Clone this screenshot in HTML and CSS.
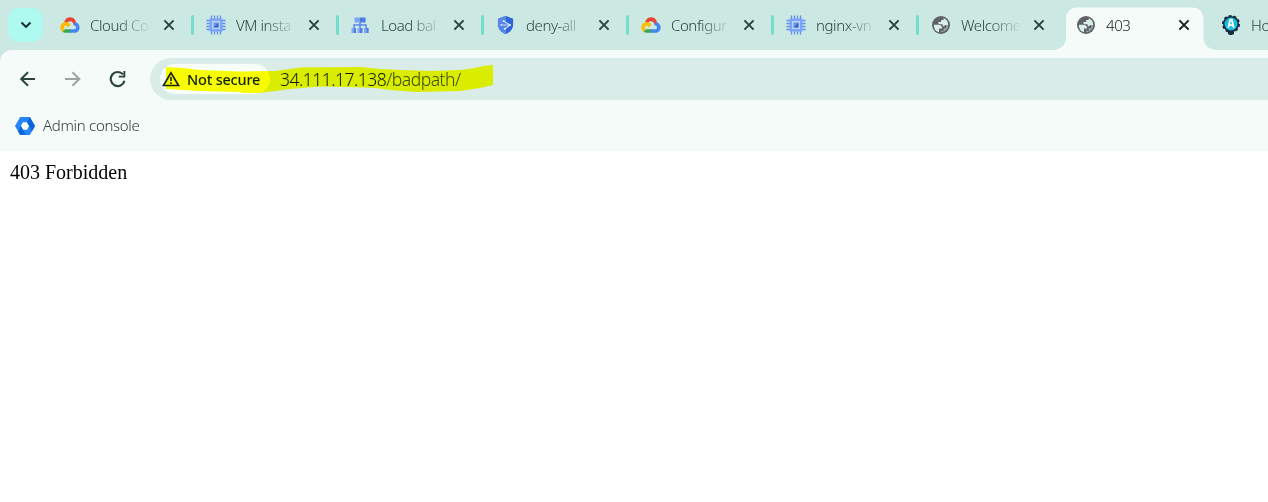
FILE: index.html
```
<!DOCTYPE html>
<html lang="en">
<head>
<meta charset="utf-8">
<title>403</title>
<link rel="stylesheet" href="styles.css">
</head>
<body>
<svg class="defs" aria-hidden="true">
  <symbol id="cloud" viewBox="0 0 20 16">
    <path d="M4.200 5.100C5 2 7.300.300 10 .300c3 0 5.400 2 6.100 4.900l-2.500 2.500C13 5.200 11.800 4.200 10 4.200c-1.600 0-2.700.800-3.300 2z" fill="#ea4335"/>
    <path d="M15.900 5.200c2.200.800 3.700 2.700 3.700 5.200 0 3.100-2.200 5.400-5.300 5.400H10v-3.600h4.100c1.200 0 1.900-.700 1.900-1.800s-.800-1.900-2-1.900l-.700-1.700z" fill="#4285f4"/>
    <path d="M10.200 12.200v3.600H5.700c-1.300 0-2.400-.400-3.300-1.100L5 12.200z" fill="#34a853"/>
    <path d="M2.400 14.700C1.100 13.700.400 12.300.400 10.500c0-3 2.300-5.400 5.300-5.400 2.200 0 3.900 1 4.700 2.800L7.900 10.400C7.400 9.200 6.800 8.700 5.700 8.700c-1.100 0-1.800.800-1.800 1.800 0 .700.400 1.300 1.100 1.700z" fill="#fbbc04"/>
  </symbol>
  <symbol id="chip" viewBox="0 0 20 20">
    <path d="M5.500 .5v4M8.500 .5v4M11.500 .5v4M14.500 .5v4M5.500 15.500v4M8.500 15.500v4M11.500 15.500v4M14.500 15.500v4M.5 5.500h4M.5 8.500h4M.5 11.500h4M.5 14.500h4M15.500 5.500h4M15.500 8.500h4M15.500 11.500h4M15.500 14.500h4" stroke="#5d8ef0" stroke-width="1.300"/>
    <path d="M3.500 3.500h13v13h-13z" fill="#7da4f5"/>
    <path d="M6 6h8v8H6z" fill="#bcd5f2"/>
    <path d="M7.500 7.500h5v5h-5z" fill="#6792ef"/><path d="M12.500 7.500v5h-5z" fill="#3467d6"/>
  </symbol>
  <symbol id="balance" viewBox="0 0 18 16">
    <path d="M9 5v6M3 12V8h12v4" fill="none" stroke="#5b86e9" stroke-width="1.500"/>
    <path d="M3.500.5H9v5H3.500zM.5 11h4v5h-4zM6.500 11h2.500v5H6.500zM13 11h2.300v5H13z" fill="#7da4f5"/>
    <path d="M9 .5h5.500v5H9zM3 11h2v5H3zM9 11h2.500v5H9zM15.300 11h2.300v5h-2.300z" fill="#4d7ce5"/>
  </symbol>
  <symbol id="shield" viewBox="0 0 16 19">
    <path d="M8 .3.3 3.300v5.600c0 4.300 3 8 7.700 9.800z" fill="#5585e8"/>
    <path d="M8 .3l7.700 3v5.600c0 4.300-3 8-7.700 9.800z" fill="#2f65d8"/>
    <path d="M3.800 9.500h8.700M6 5.500l6.500 4-5.300 4" fill="none" stroke="#c8dcfa" stroke-width="1.200"/>
    <path d="M5.200 4.700h1.600v1.600H5.200zM2.900 8.700h1.600v1.600H2.900zM11.500 8.700h1.800v1.800h-1.800zM6.400 12.700H8v1.600H6.400z" fill="#e3effd"/>
  </symbol>
  <symbol id="globe" viewBox="0 0 18 18">
    <circle cx="9" cy="9" r="9" fill="#5f6368"/>
    <path d="M1.900 8.700h4.300c2.600 0 4 1.300 3.900 3.900H7v3.600A7.300 7.300 0 0 1 1.900 8.700z" fill="#d9eee9"/>
    <path d="M11.600 2.200A7.300 7.300 0 0 1 16.200 9h-3.100c-.5 1-1.300 1.500-2.400 1.300V8.300H8.500C7 8.300 6.200 7.500 6.300 6h2.800V3.900h2.500z" fill="#d9eee9"/>
    <path d="M16.200 9a7.300 7.300 0 0 1-7 7.200v-1.500h2.600v-2.500h2.400V9z" fill="#d9eee9" opacity=".5"/>
  </symbol>
  <symbol id="close" viewBox="0 0 12 12">
    <path d="M1.400 1.400l9.200 9.200M10.600 1.400l-9.200 9.200" fill="none" stroke="currentColor" stroke-width="2"/>
  </symbol>
</svg>

<header class="strip">
  <button class="search" aria-label="Search tabs"><svg width="12" height="8" viewBox="0 0 12 8"><path d="M1.500 1.500 6 5.900l4.500-4.400" fill="none" stroke="#0d2b27" stroke-width="2"/></svg></button>
  <div class="tab first"><svg class="icon"><use href="#cloud" y="2" width="20" height="16"/></svg><span class="title">Cloud Co</span><svg class="x"><use href="#close"/></svg></div>
  <div class="tab"><svg class="icon"><use href="#chip" width="20" height="20"/></svg><span class="title">VM insta</span><svg class="x"><use href="#close"/></svg></div>
  <div class="tab"><svg class="icon"><use href="#balance" y="2" width="18" height="16"/></svg><span class="title">Load bal</span><svg class="x"><use href="#close"/></svg></div>
  <div class="tab"><svg class="icon"><use href="#shield" x="1.500" y="0.500" width="16" height="19"/></svg><span class="title">deny-all</span><svg class="x"><use href="#close"/></svg></div>
  <div class="tab"><svg class="icon"><use href="#cloud" y="2" width="20" height="16"/></svg><span class="title">Configur</span><svg class="x"><use href="#close"/></svg></div>
  <div class="tab"><svg class="icon"><use href="#chip" width="20" height="20"/></svg><span class="title">nginx-vn</span><svg class="x"><use href="#close"/></svg></div>
  <div class="tab last"><svg class="icon"><use href="#globe" x="1" y="1" width="18" height="18"/></svg><span class="title">Welcome</span><svg class="x"><use href="#close"/></svg></div>
  <div class="tab active"><svg class="shape" viewBox="0 0 166 43"><path d="M0 43C9 43 14 38 14 30V13Q14 .5 26 .5H139Q151.500 .5 151.500 13V30C151.500 38 157 43 166 43z" fill="#f4fbf9"/></svg><svg class="icon"><use href="#globe" x="1" y="1" width="18" height="18"/></svg><span class="title">403</span><svg class="x"><use href="#close"/></svg></div>
  <div class="tab end"><svg class="icon" viewBox="0 0 20 20"><circle cx="10" cy="9" r="8" fill="#172b40" stroke="#172b40" stroke-width="2" stroke-dasharray="3 2"/><path d="M7 16h6v3l-2 1H9l-2-1z" fill="#172b40"/><circle cx="10" cy="9" r="6.500" fill="#19bce0"/><path d="M7.200 13 9.200 4.700h1.600l2 8.300M8 10.200h4" fill="none" stroke="#fff" stroke-width="1.700"/></svg><span class="title">Ho</span></div>
</header>

<nav class="toolbar">
  <svg class="nav" viewBox="0 0 18 18"><path d="M16 9H2.500M9 2.200 2.200 9 9 15.800" fill="none" stroke="#29443f" stroke-width="2"/></svg>
  <svg class="nav" viewBox="0 0 18 18"><path d="M1 9h14M8.500 2.200 15.300 9l-6.800 6.800" fill="none" stroke="#9aa5a2" stroke-width="2"/></svg>
  <svg class="nav" viewBox="0 0 18 18"><path d="M14 4.400A7 7 0 1 0 15.500 10.800" fill="none" stroke="#29443f" stroke-width="2.200"/><path d="M16.300 1v6.500H9.800V5.700h4.600V1z" fill="#29443f"/></svg>
  <div class="address">
    <div class="chipbox"><svg class="warn" viewBox="0 0 18 16"><path d="M9 1.800 1.500 14.500h15z" fill="none" stroke="#1b2420" stroke-width="1.700"/><path d="M9 6v4M9 11.300v1.800" stroke="#1b2420" stroke-width="1.600"/></svg><span>Not secure</span></div>
    <span class="url"><b>34.111.17.138</b>/badpath/</span>
    <svg class="marker" viewBox="166 65 327 29"><path d="M166 67L183 68 200 70 240 71.500 275 71 290 69 300 67.500 360 67 380 69 400 70 430 71 460 70 475 68 483 66 493 65V85L480 88 460 91 416 92 390 90 375 88 348 87 320 86.500 302 88 290 89 275 91 258 93H243L240 92 200 91 183 90 166 89z" fill="#ff0"/></svg>
  </div>
</nav>

<div class="bookmarks">
  <svg class="admin" viewBox="0 0 20 18"><path fill-rule="evenodd" d="M5.200 0h9.600L20 9l-5.200 9H5.200L0 9zM8 5.200 5.800 9 8 12.800h4L14.200 9 12 5.200z" fill="#2684fc"/><path d="M14.800 0 20 9l-3 5.200L14.200 9l-2.200-3.800zM3 14.200 5.800 9 8 12.800 10.500 18H5.200z" fill="#0766da"/></svg>
  <span>Admin console</span>
</div>
<main class="page">403 Forbidden</main>
</body>
</html>
```

FILE: styles.css
```
* { box-sizing: border-box; }
body { margin: 0; width: 1268px; height: 502px; overflow: hidden; background: #fff; font-family: "Noto Sans", "Open Sans", sans-serif; font-size: 15px; font-weight: 350; color: #29443f; }
svg { display: block; flex: none; }
.defs { position: absolute; width: 0; height: 0; }
.strip { display: flex; height: 50px; background: #cce8e2; }
.search { flex: none; width: 35px; height: 34px; margin: 8px 7px 0 8px; padding: 0 0 1px 1px; border: 0; border-radius: 11px; background: #aefaf0; display: grid; place-items: center; }
.tab { position: relative; flex: none; display: flex; align-items: center; width: 145px; padding-left: 11px; }
.tab.first { padding-left: 10px; }
.tab.first .title { margin-right: 12px; }
.tab::after { content: ""; flex: none; width: 3px; height: 20px; margin-left: 16px; border-radius: 2px; background: #76dccb; }
.tab.last::after, .tab.active::after { visibility: hidden; }
.tab.end { flex: 1; min-width: 0; }
.tab.end::after { display: none; }
.icon { width: 20px; height: 20px; }
.title { flex: none; width: 61px; margin: 0 11px 0 10px; white-space: nowrap; letter-spacing: -.42px; line-height: 22px; -webkit-mask-image: linear-gradient(90deg, #000 28px, transparent 61px); mask-image: linear-gradient(90deg, #000 28px, transparent 61px); }
.end .title { width: 18px; margin-right: 0; -webkit-mask-image: none; mask-image: none; }
.x { width: 12px; height: 12px; color: #29443f; }
.active { color: #12201d; z-index: 1; }
.active .title { -webkit-mask-image: none; mask-image: none; }
.active .x { color: #12201d; }
.active > :not(.shape) { position: relative; }
.shape { position: absolute; left: -13px; top: 7px; width: 166px; height: 43px; }
.toolbar { display: flex; align-items: center; height: 56px; padding-left: 19px; background: radial-gradient(circle at 12px 12px, #f4fbf9 11.5px, #cce8e2 12.5px) 0 0 / 12px 12px no-repeat, linear-gradient(#f4fbf9, #f4fbf9) 12px 0 no-repeat, linear-gradient(#f4fbf9, #f4fbf9) 0 12px no-repeat; }
.nav { width: 18px; height: 18px; margin: 1px 27px 0 0; }
.address { position: relative; flex: 1; display: flex; align-items: center; height: 42px; margin: 2px 0 0 -4px; padding-left: 10px; border-radius: 21px 0 0 21px; background: #daece8; }
.chipbox { flex: none; display: flex; align-items: center; width: 110px; height: 30px; padding: 0 0 1px 2px; border-radius: 15px; background: #f7fdfb; color: #14211e; font-size: 14.5px; font-weight: 500; letter-spacing: -.2px; white-space: nowrap; }
.warn { width: 18px; height: 16px; margin-right: 7px; }
.url { margin: 0 0 0 10px; font-size: 17.500px; letter-spacing: -.5px; color: #3b4b47; }
.url b { font-weight: 350; color: #0c1b18; }
.marker { position: absolute; left: 16px; top: 7px; width: 327px; height: 29px; mix-blend-mode: multiply; }
.bookmarks { display: flex; align-items: center; gap: 8px; height: 45px; padding: 0 0 5px 15px; background: #f4fbf9; color: #303b39; letter-spacing: -.3px; }
.bookmarks span { margin-bottom: 2px; }
.admin { width: 20px; height: 18px; }
.page { padding: 9px 10px; font: 400 20px/24px "Liberation Serif", serif; color: #000; }
```
